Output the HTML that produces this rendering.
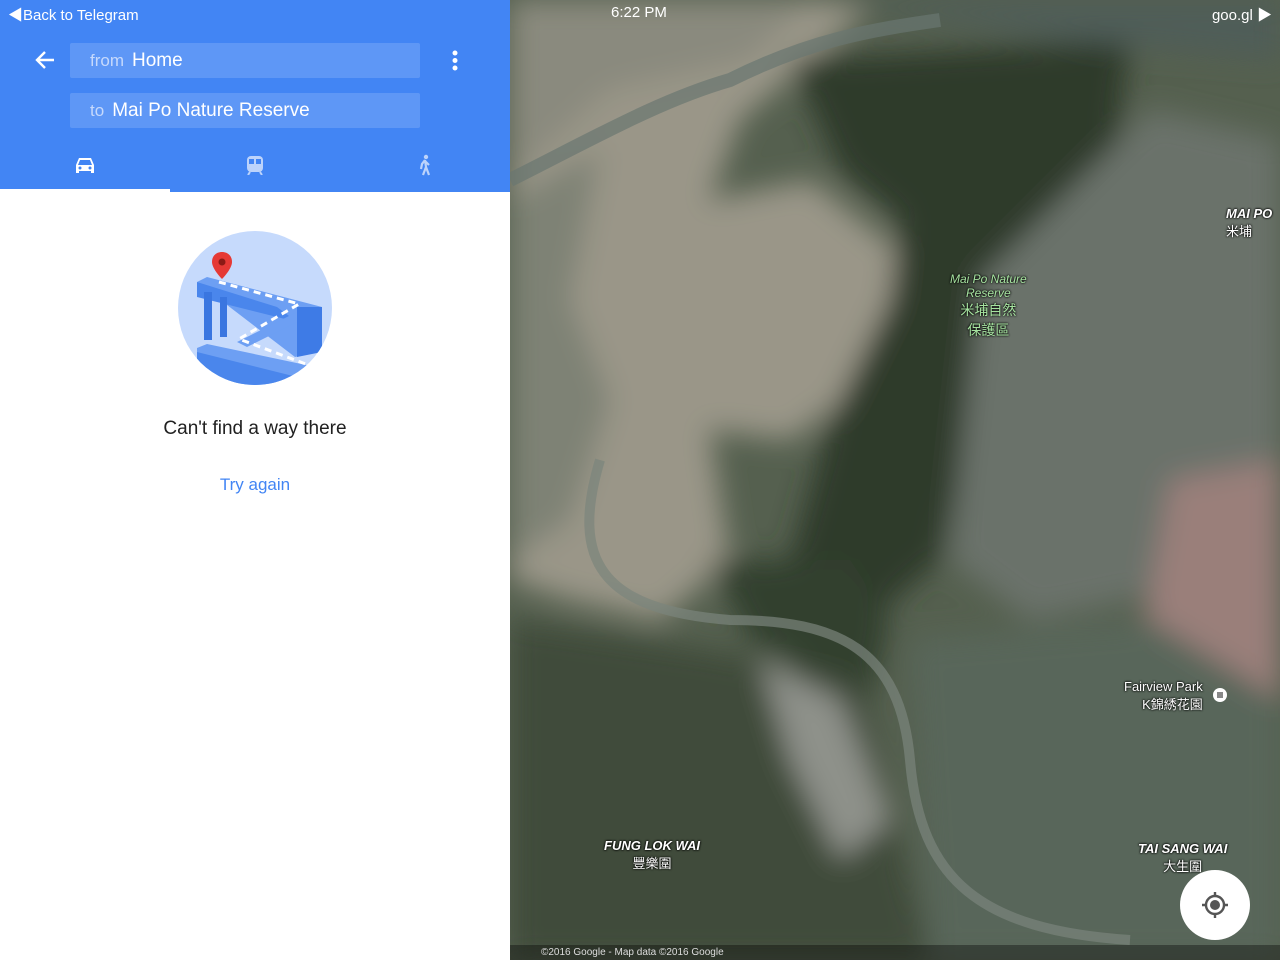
<!DOCTYPE html>
<html><head><meta charset="utf-8"><style>
*{margin:0;padding:0;box-sizing:border-box}
body{width:1280px;height:960px;overflow:hidden;font-family:"Liberation Sans","Noto Sans CJK SC",sans-serif;position:relative;background:#fff}
#left{position:absolute;left:0;top:0;width:510px;height:960px;background:#fff}
#hdr{position:absolute;left:0;top:0;width:510px;height:192px;background:#4285f4}
.back{position:absolute;left:8px;top:4px;color:#fff;font-size:15px}
.field{position:absolute;left:70px;width:350px;height:35px;background:#5e97f6;border-radius:2px;color:#fff;font-size:19px;line-height:35px;padding-left:20px}
.field span{color:#c6d9fc;font-size:17px;margin-right:8px}
.tabline{position:absolute;left:0;top:189px;width:170px;height:4px;background:#fff}
.map{position:absolute;left:510px;top:0;width:770px;height:960px;overflow:hidden}
.lbl{position:absolute;color:#fff;font-style:italic;font-weight:bold;font-size:13px;text-shadow:0 0 2px #000,0 0 2px #000}
.g{color:#a6e3a0;font-weight:normal;font-size:12px;text-align:center}
</style></head><body>
<div id="left">
<div id="hdr">
<div class="back">&#9664;Back to Telegram</div>
<svg style="position:absolute;left:34px;top:49px" width="22" height="22" viewBox="0 0 22 22"><path d="M20 11H4M11 3l-8 8 8 8" stroke="#fff" stroke-width="2.4" fill="none"/></svg>
<div class="field" style="top:43px"><span>from</span>Home</div>
<div class="field" style="top:93px"><span>to</span>Mai Po Nature Reserve</div>
<svg style="position:absolute;left:451px;top:50px" width="8" height="22"><circle cx="4" cy="3" r="2.5" fill="#fff"/><circle cx="4" cy="10.5" r="2.5" fill="#fff"/><circle cx="4" cy="18" r="2.5" fill="#fff"/></svg>
<svg style="position:absolute;left:75px;top:156px" width="20" height="18" viewBox="0 0 20 18"><path d="M4 2h12l3 7v8h-3v-2H4v2H1V9z" fill="#fff"/><path d="M5 4h10l2 5H3z" fill="#4285f4"/><circle cx="5" cy="12" r="1.5" fill="#4285f4"/><circle cx="15" cy="12" r="1.5" fill="#4285f4"/></svg>
<svg style="position:absolute;left:246px;top:155px" width="18" height="20" viewBox="0 0 18 20"><rect x="1" y="1" width="16" height="16" rx="4" fill="#bcd3fb"/><rect x="3" y="4" width="5" height="5" fill="#4285f4"/><rect x="10" y="4" width="5" height="5" fill="#4285f4"/><path d="M4 17l-2 3M14 17l2 3" stroke="#bcd3fb" stroke-width="2"/></svg>
<svg style="position:absolute;left:417px;top:154px" width="16" height="22" viewBox="0 0 16 22"><circle cx="9" cy="3" r="2.2" fill="#bcd3fb"/><path d="M8 6L5 10l-1 5M8 6l1 7-3 8M9 13l3 8M8 7l4 4" stroke="#bcd3fb" stroke-width="2.2" fill="none"/></svg>
<div class="tabline"></div>
</div>
<svg style="position:absolute;left:177px;top:230px" width="156" height="156" viewBox="0 0 156 156">
<defs><clipPath id="c"><circle cx="78" cy="78" r="77"/></clipPath></defs>
<circle cx="78" cy="78" r="77" fill="#c6dafc"/>
<g clip-path="url(#c)">
<path d="M20 50L80 76L142 76L142 120L80 120L120 140L40 156L20 156L20 118L80 120L120 100z" fill="#4a86ec" opacity="0"/>
<path d="M20 52l10-5 115 30-2 45-25 5z" fill="#6d9ff3"/>
<path d="M20 52v15l100 25-20-15z" fill="#4a86ec"/>
<path d="M120 77l25 0v45l-25 5z" fill="#3e7be6"/>
<path d="M20 118l10-4 118 25v20H20z" fill="#6d9ff3"/>
<path d="M20 122l128 32v5H20z" fill="#4a86ec"/>
<path d="M60 112l60-30v10l-50 25z" fill="#6d9ff3"/>
<rect x="27" y="62" width="8" height="48" fill="#3a76e0"/>
<rect x="43" y="67" width="7" height="40" fill="#3a76e0"/>
<path d="M42 52l80 22-60 35 80 30" stroke="#fff" stroke-width="3" stroke-dasharray="7 5" fill="none"/>
</g>
<path d="M45 22c-6 0-10 4-10 10 0 7 10 17 10 17s10-10 10-17c0-6-4-10-10-10z" fill="#e53935"/><circle cx="45" cy="32" r="3.5" fill="#8b1a15"/>
</svg>
<div style="position:absolute;left:0;width:510px;top:418px;text-align:center;font-size:19px;color:#212121">Can't find a way there</div>
<div style="position:absolute;left:0;width:510px;top:475px;text-align:center;font-size:17px;color:#4285f4">Try again</div>
</div>
<div class="map">
<svg width="770" height="960" viewBox="0 0 770 960" style="position:absolute;left:0;top:0">
<defs><filter id="b"><feGaussianBlur stdDeviation="14"/></filter></defs>
<rect width="770" height="960" fill="#55604f"/>
<g filter="url(#b)">
<path d="M0 0H370L300 60 230 120 200 200 300 180 400 260 360 380 280 440 200 430 220 560 150 620 60 600 0 580z" fill="#9a9688"/>
<path d="M0 0H300L240 60 100 90 0 180z" fill="#8a8a7e"/>
<path d="M0 200L90 150 60 300 100 400 60 520 0 560z" fill="#7e8275"/>
<path d="M280 60L620 40 600 200 480 360 430 560 360 620 280 560 320 420 380 300 390 220 330 170z" fill="#2f3b2c"/>
<path d="M200 560L340 560 380 620 360 700 240 640z" fill="#33402f"/>
<path d="M470 280L640 110 770 140V560L620 600 520 620 440 560z" fill="#6a726a"/>
<path d="M660 480L770 460V860L660 820 620 700z" fill="#9a7f7a"/>
<path d="M0 620L200 650 350 680 420 960H0z" fill="#3f4b3a"/>
<path d="M400 640L640 620 770 700V960H420z" fill="#59665a"/>
<path d="M250 660L330 700 380 820 330 860 280 760z" fill="#8e918a"/>
<path d="M300 0H770V60L560 40z" fill="#4f5d58"/>
</g>
<path d="M0 180C80 140 150 100 220 80 300 40 360 30 430 20" stroke="#6a7670" stroke-width="14" fill="none" opacity=".7"/>
<path d="M90 460C60 560 90 610 220 620 330 620 390 650 400 760 410 880 470 930 620 940" stroke="#7a847c" stroke-width="10" fill="none" opacity=".7"/>
<rect x="0" y="945" width="770" height="15" fill="#000" opacity=".35"/>
</svg>
<div style="position:absolute;left:101px;top:4px;color:#fff;font-size:15px">6:22 PM</div>
<div style="position:absolute;right:8px;top:4px;color:#fff;font-size:15px">goo.gl &#9654;</div>
<div class="lbl" style="left:716px;top:206px">MAI PO<br><span style="font-style:normal;font-weight:normal">米埔</span></div>
<div class="lbl g" style="left:440px;top:272px;font-style:italic">Mai Po Nature<br>Reserve<br><span style="font-style:normal;font-size:14px">米埔自然<br>保護區</span></div>
<div class="lbl" style="left:614px;top:679px;font-style:normal;font-weight:normal;text-align:right">Fairview Park<br>K錦綉花園</div>
<div style="position:absolute;left:703px;top:688px;width:14px;height:14px;border-radius:50%;background:#fff"><div style="margin:4px;width:6px;height:6px;background:#888"></div></div>
<div class="lbl" style="left:94px;top:838px;text-align:center">FUNG LOK WAI<br><span style="font-style:normal;font-weight:normal">豐樂圍</span></div>
<div class="lbl" style="left:628px;top:841px;text-align:center">TAI SANG WAI<br><span style="font-style:normal;font-weight:normal">大生圍</span></div>
<div style="position:absolute;left:670px;top:870px;width:70px;height:70px;border-radius:50%;background:#fff"></div>
<svg style="position:absolute;left:690px;top:890px" width="30" height="30" viewBox="0 0 30 30"><circle cx="15" cy="15" r="9" stroke="#555" stroke-width="2.4" fill="none"/><circle cx="15" cy="15" r="5" fill="#555"/><path d="M15 2v5M15 23v5M2 15h5M23 15h5" stroke="#555" stroke-width="2.4"/></svg>
<div style="position:absolute;left:31px;top:947px;color:#ddd;font-size:10px">©2016 Google - Map data ©2016 Google</div>
</div>
</body></html>
